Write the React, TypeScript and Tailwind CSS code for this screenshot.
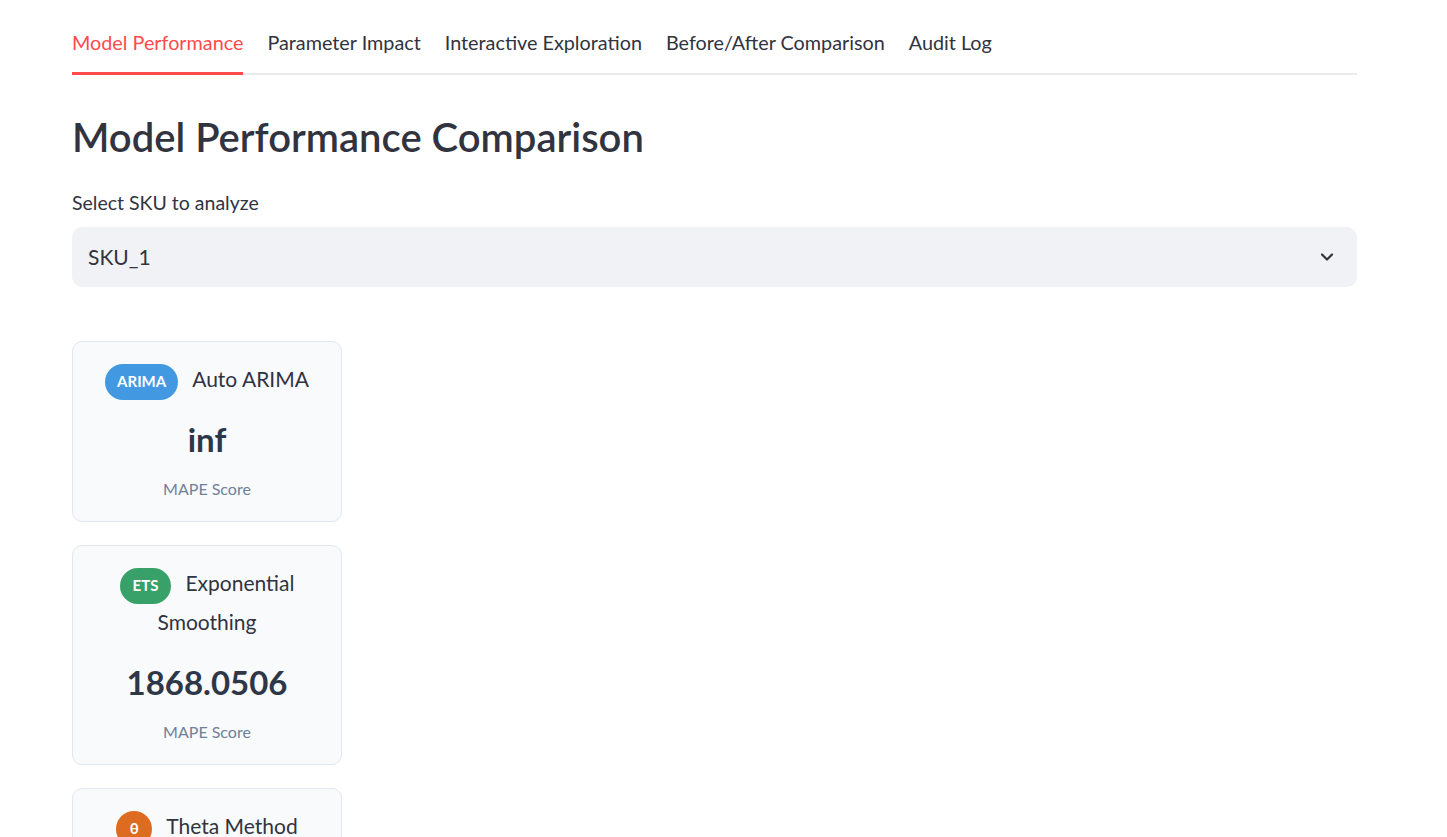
import React from 'react';

const tabs = [
  'Model Performance',
  'Parameter Impact',
  'Interactive Exploration',
  'Before/After Comparison',
  'Audit Log',
];

const models = [
  { badge: 'ARIMA', badgeClass: 'bg-[#4299e1] px-3', name: 'Auto ARIMA', score: 'inf' },
  { badge: 'ETS', badgeClass: 'bg-[#38a169] px-[13px]', name: 'Exponential Smoothing', score: '1868.0506' },
  { badge: 'θ', badgeClass: 'bg-[#dd6b20] w-[36px] justify-center', name: 'Theta Method', score: '1702.3318' },
];

const ModelCard = ({
  badge,
  badgeClass,
  name,
  score,
}: {
  badge: string;
  badgeClass: string;
  name: string;
  score: string;
}) => (
  <div className="w-[270px] rounded-[10px] border border-[#e2e8f0] bg-[#f8fafc] px-6 pt-[17px] pb-[20px] text-center">
    <div className="text-[21px] leading-[39px] text-[#31333f]">
      <span
        className={`-my-[4px] mr-[14px] inline-flex h-[36px] items-center rounded-full align-middle text-[15px] font-bold leading-none text-white ${badgeClass}`}
      >
        {badge}
      </span>
      {name}
    </div>
    <div className="mt-[15px] text-[33px] font-bold leading-[52px] text-[#2d3748]">{score}</div>
    <div className="mt-[12px] text-[16px] leading-[24px] text-[#718096]">MAPE Score</div>
  </div>
);

export default function App() {
  return (
    <div
      className="min-h-screen bg-white px-[72px] pt-[28px] text-[#31333f]"
      style={{ fontFamily: '"Lato", "Open Sans", sans-serif' }}
    >
      <div className="w-[1285px]">
        <div className="flex gap-6 border-b-2 border-[#ebebeb]">
          {tabs.map((t, i) => (
            <div
              key={t}
              className={`-mb-[2px] pb-[16px] text-[19.8px] leading-[28px] ${
                i === 0 ? 'border-b-[3px] border-[#ff4b4b] text-[#ff4b4b]' : 'border-b-[3px] border-transparent'
              }`}
            >
              {t}
            </div>
          ))}
        </div>

        <h1 className="mt-[34px] text-[40px] font-semibold leading-[56px] text-[#31333f]">
          Model Performance Comparison
        </h1>

        <div className="mt-[26px] text-[19.5px] leading-[24px]">Select SKU to analyze</div>
        <div className="mt-[12px] flex h-[60px] items-center justify-between rounded-[10px] bg-[#f0f2f6] pl-4 pr-5">
          <span className="text-[21px]">SKU_1</span>
          <svg width="20" height="20" viewBox="0 0 24 24" fill="none" stroke="#31333f" strokeWidth="2.6" strokeLinecap="round" strokeLinejoin="round">
            <path d="M6 9l6 6 6-6" />
          </svg>
        </div>

        <div className="mt-[54px] flex flex-col gap-[23px]">
          {models.map((m) => (
            <ModelCard key={m.name} {...m} />
          ))}
        </div>
      </div>
    </div>
  );
}
